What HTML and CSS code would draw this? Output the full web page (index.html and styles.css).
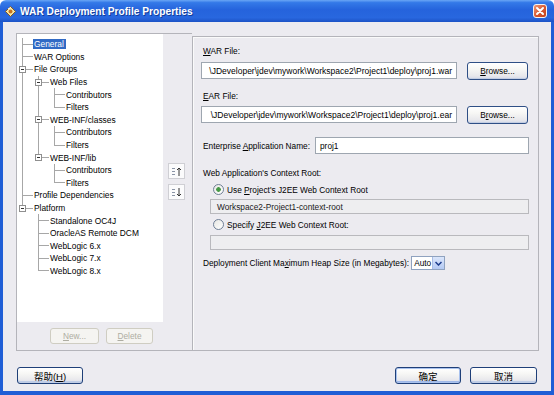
FILE: index.html
```html
<!DOCTYPE html>
<html lang="en">
<head>
    <meta charset="UTF-8">
    <title>WAR Deployment Profile Properties</title>
    <link rel="stylesheet" href="styles.css">
</head>
<body>

<div class="window">
    <div class="titlebar">
        <svg class="app-icon" width="11" height="11" viewBox="0 0 11 11">
            <path d="M5.5 0.5 L10.5 5.5 L5.5 10.5 L0.5 5.5 Z" fill="#f4e7a8" stroke="#8a5a1c" stroke-width="1"/>
            <circle cx="5.5" cy="5.5" r="2" fill="#c9731e"/>
            <path d="M3 3 L5.5 1.5" stroke="#fff" stroke-width="1"/>
        </svg>
        <span class="title">WAR Deployment Profile Properties</span>
        <span class="close-btn">
            <svg width="12" height="12" viewBox="0 0 12 12">
                <path d="M3 3 L9 9 M9 3 L3 9" stroke="#fff" stroke-width="2" stroke-linecap="round"/>
            </svg>
        </span>
    </div>

    <div class="body">
        <div class="main">
            <div class="nav-pane">
                <div class="nav-col">
                    <div class="tree">
                        <div class="row"><i class="g t"></i><span class="label selected">General</span></div>
                        <div class="row"><i class="g t"></i><span class="label">WAR Options</span></div>
                        <div class="row"><i class="g t"><b class="exp"></b></i><span class="label">File Groups</span></div>
                        <div class="row"><i class="g v"></i><i class="g t"><b class="exp"></b></i><span class="label">Web Files</span></div>
                        <div class="row"><i class="g v"></i><i class="g v"></i><i class="g t"></i><span class="label">Contributors</span></div>
                        <div class="row"><i class="g v"></i><i class="g v"></i><i class="g l"></i><span class="label">Filters</span></div>
                        <div class="row"><i class="g v"></i><i class="g t"><b class="exp"></b></i><span class="label">WEB-INF/classes</span></div>
                        <div class="row"><i class="g v"></i><i class="g v"></i><i class="g t"></i><span class="label">Contributors</span></div>
                        <div class="row"><i class="g v"></i><i class="g v"></i><i class="g l"></i><span class="label">Filters</span></div>
                        <div class="row"><i class="g v"></i><i class="g l"><b class="exp"></b></i><span class="label">WEB-INF/lib</span></div>
                        <div class="row"><i class="g v"></i><i class="g"></i><i class="g t"></i><span class="label">Contributors</span></div>
                        <div class="row"><i class="g v"></i><i class="g"></i><i class="g l"></i><span class="label">Filters</span></div>
                        <div class="row"><i class="g t"></i><span class="label">Profile Dependencies</span></div>
                        <div class="row"><i class="g l"><b class="exp"></b></i><span class="label">Platform</span></div>
                        <div class="row"><i class="g"></i><i class="g t"></i><span class="label">Standalone OC4J</span></div>
                        <div class="row"><i class="g"></i><i class="g t"></i><span class="label">OracleAS Remote DCM</span></div>
                        <div class="row"><i class="g"></i><i class="g t"></i><span class="label">WebLogic 6.x</span></div>
                        <div class="row"><i class="g"></i><i class="g t"></i><span class="label">WebLogic 7.x</span></div>
                        <div class="row"><i class="g"></i><i class="g l"></i><span class="label">WebLogic 8.x</span></div>
                    </div>
                    <div class="nav-actions">
                        <button class="btn disabled new-btn"><u>N</u>ew...</button>
                        <button class="btn disabled delete-btn"><u>D</u>elete</button>
                    </div>
                </div>
                <div class="order-btns">
                    <button class="order-btn">
                        <svg width="11" height="11" viewBox="0 0 11 11">
                            <path d="M1 2.5 H4 M1 5.5 H4 M1 8.5 H4" stroke="#8a94a6" stroke-width="1"/>
                            <path d="M8 2 V10 M6 4 L8 2 L10 4" stroke="#333" stroke-width="1" fill="none"/>
                        </svg>
                    </button>
                    <button class="order-btn">
                        <svg width="11" height="11" viewBox="0 0 11 11">
                            <path d="M1 2.5 H4 M1 5.5 H4 M1 8.5 H4" stroke="#8a94a6" stroke-width="1"/>
                            <path d="M8 1 V9 M6 7 L8 9 L10 7" stroke="#333" stroke-width="1" fill="none"/>
                        </svg>
                    </button>
                </div>
            </div>

            <div class="props-pane">
                <div class="lbl-block first"><u>W</u>AR File:</div>
                <div class="field-row">
                    <div class="field path"><span>\JDeveloper\jdev\mywork\Workspace2\Project1\deploy\proj1.war</span></div>
                    <button class="btn browse"><u>B</u>rowse...</button>
                </div>

                <div class="lbl-block ear"><u>E</u>AR File:</div>
                <div class="field-row">
                    <div class="field path"><span>\JDeveloper\jdev\mywork\Workspace2\Project1\deploy\proj1.ear</span></div>
                    <button class="btn browse">B<u>r</u>owse...</button>
                </div>

                <div class="name-row">
                    <span class="lbl">Enterprise <u>A</u>pplication Name:</span>
                    <div class="field name-field">proj1</div>
                </div>

                <div class="lbl-block context">Web Application's Context Root:</div>
                <div class="radio-row">
                    <span class="radio checked"></span>
                    <span>Use <u>P</u>roject's J2EE Web Context Root</span>
                </div>
                <div class="field disabled-field">Workspace2-Project1-context-root</div>
                <div class="radio-row second">
                    <span class="radio"></span>
                    <span>Specify <u>J</u>2EE Web Context Root:</span>
                </div>
                <div class="field disabled-field second"></div>

                <div class="heap-row">
                    <span class="lbl">Deployment Client Ma<u>x</u>imum Heap Size (in Megabytes):</span>
                    <div class="select">
                        <span class="select-value">Auto</span>
                        <span class="select-arrow">
                            <svg width="7" height="5" viewBox="0 0 7 5">
                                <path d="M0.5 1 L3.5 4 L6.5 1" stroke="#1c3c8c" stroke-width="1.5" fill="none"/>
                            </svg>
                        </span>
                    </div>
                </div>
            </div>
        </div>

        <div class="footer">
            <button class="btn dlg-btn cjk">帮助(<u>H</u>)</button>
            <span class="spacer"></span>
            <button class="btn dlg-btn cjk default">确定</button>
            <button class="btn dlg-btn cjk cancel">取消</button>
        </div>
    </div>
</div>

</body>
</html>
```

FILE: styles.css
```css
html {
    background: #ffffff;
}
body {
    margin: 0;
    font-family: 'Liberation Sans', Arial, sans-serif;
    font-size: 8.3px;
    color: #000;
}
u {
    text-decoration: underline;
    text-underline-offset: 1px;
}
.window {
    width: 554px;
    height: 395px;
    display: flex;
    flex-direction: column;
    border-radius: 6px 6px 0 0;
    overflow: hidden;
}
.titlebar {
    height: 22px;
    flex: none;
    display: flex;
    align-items: center;
    padding: 0 7px 0 5px;
    background: linear-gradient(#6aa6f5 0, #3479e8 12%, #2563dc 45%, #2867df 80%, #1c53c6 100%);
}
.app-icon {
    flex: none;
}
.title {
    margin-left: 4px;
    color: #fff;
    font-weight: bold;
    font-size: 10.2px;
    text-shadow: 1px 1px 0 #123d9a;
}
.close-btn {
    margin-left: auto;
    width: 14px;
    height: 14px;
    box-sizing: border-box;
    border: 1px solid #f3f3f3;
    border-radius: 3px;
    background: linear-gradient(135deg, #ee9a78, #d6562f 55%, #c4431c);
    display: flex;
    align-items: center;
    justify-content: center;
}
.body {
    flex: 1;
    background: #ecebf0;
    border: 3px solid #1f5ed6;
    border-top: none;
    border-bottom-width: 4px;
    padding: 11px 12px 0 13px;
    display: flex;
    flex-direction: column;
}
.main {
    width: 523px;
    height: 318px;
    display: flex;
    align-items: flex-start;
}
.nav-pane {
    width: 176px;
    height: 318px;
    box-sizing: border-box;
    border: 1px solid #b4b4ba;
    border-right: none;
    display: flex;
}
.nav-col {
    width: 146px;
    display: flex;
    flex-direction: column;
}
.tree {
    height: 288px;
    box-sizing: border-box;
    background: #fff;
    padding-top: 4px;
}
.row {
    height: 12.6px;
    display: flex;
    align-items: center;
}
.g {
    width: 16px;
    height: 100%;
    flex: none;
    display: flex;
    align-items: center;
}
.g.v {
    background: linear-gradient(#a7a7a7, #a7a7a7) 5px 0 / 1px 100% no-repeat;
}
.g.t {
    background:
        linear-gradient(#a7a7a7, #a7a7a7) 5px 0 / 1px 100% no-repeat,
        linear-gradient(#a7a7a7, #a7a7a7) 5px 50% / 11px 1px no-repeat;
}
.g.l {
    background:
        linear-gradient(#a7a7a7, #a7a7a7) 5px 0 / 1px 50% no-repeat,
        linear-gradient(#a7a7a7, #a7a7a7) 5px 50% / 11px 1px no-repeat;
}
.exp {
    width: 7px;
    height: 7px;
    margin-left: 2px;
    box-sizing: border-box;
    border: 1px solid #8f8f8f;
    background: linear-gradient(#333, #333) center / 3px 1px no-repeat, #fff;
}
.label {
    padding: 0 2px 0 1px;
    line-height: 10px;
    white-space: nowrap;
    font-size: 8.4px;
}
.label.selected {
    background: #316ac5;
    color: #fff;
}
.nav-actions {
    margin-top: 6px;
    display: flex;
    justify-content: flex-end;
    gap: 7px;
    padding-right: 10px;
}
.btn {
    font-family: 'Liberation Sans', Arial, sans-serif;
    font-size: 8.3px;
    color: #000;
    padding: 0;
    box-sizing: border-box;
    border: 1px solid #2f4f86;
    border-radius: 3px;
    background: linear-gradient(#ffffff, #f6f6f4 40%, #e8e8ec 80%, #d6dae8);
    box-shadow: inset 0 -1px 0 #c3cde2;
}
.btn.disabled {
    height: 16px;
    color: #aeada2;
    border-color: #cfcdc2;
    background: #f5f4f1;
    box-shadow: none;
}
.new-btn {
    width: 49px;
}
.delete-btn {
    width: 47px;
}
.order-btns {
    margin-left: 5px;
    padding-top: 129px;
    display: flex;
    flex-direction: column;
    gap: 5px;
}
.order-btn {
    width: 17px;
    height: 16px;
    padding: 0;
    border: 1px solid #cfcfd4;
    background: #fbfbfc;
    display: flex;
    align-items: center;
    justify-content: center;
}
.props-pane {
    width: 347px;
    height: 315px;
    margin-top: 3px;
    box-sizing: border-box;
    border: 1px solid #b4b4ba;
    box-shadow: inset 1px 1px 0 #fafafa;
    padding: 0 9px 0 8px;
    display: flex;
    flex-direction: column;
}
.lbl-block {
    height: 10px;
    line-height: 10px;
    margin-left: 2px;
}
.lbl-block.first {
    margin-top: 9px;
}
.lbl-block.ear {
    margin-top: 11px;
}
.lbl-block.context {
    margin-top: 14px;
}
.field-row {
    display: flex;
    align-items: flex-start;
    gap: 10px;
    margin-top: 6px;
}
.field-row + .lbl-block + .field-row {
    margin-top: 5px;
}
.field {
    height: 17px;
    box-sizing: border-box;
    border: 1px solid #9ea6b0;
    background: #fff;
    display: flex;
    align-items: center;
    white-space: nowrap;
    overflow: hidden;
    padding: 0 4px;
}
.field.path {
    width: 256px;
    justify-content: flex-end;
}
.field.path span {
    font-size: 8.5px;
}
.btn.browse {
    width: 61px;
    height: 18px;
}
.name-row {
    margin-top: 13px;
    height: 17px;
    display: flex;
    align-items: center;
}
.lbl {
    margin-left: 2px;
    white-space: nowrap;
}
.name-field {
    margin-left: auto;
    width: 214px;
}
.radio-row {
    margin-top: 6px;
    height: 11px;
    display: flex;
    align-items: center;
    padding-left: 12px;
    gap: 3px;
}
.radio-row.second {
    margin-top: 5px;
}
.radio {
    width: 11px;
    height: 11px;
    box-sizing: border-box;
    border: 1px solid #6f7f96;
    border-radius: 50%;
    background: linear-gradient(135deg, #e6e6e2, #ffffff);
}
.radio.checked {
    background: radial-gradient(circle, #3f9a3f 0, #4c9a4c 2px, transparent 2.6px), linear-gradient(135deg, #e6e6e2, #ffffff);
}
.field.disabled-field {
    margin-top: 4px;
    margin-left: 9px;
    width: 319px;
    height: 15px;
    background: #eeeef0;
    border-color: #b9b9bd;
    color: #1a1a1a;
    padding-left: 6px;
}
.field.disabled-field.second {
    margin-top: 5px;
}
.heap-row {
    margin-top: 6px;
    height: 14px;
    display: flex;
    align-items: center;
    gap: 2px;
}
.select {
    width: 34px;
    height: 14px;
    box-sizing: border-box;
    border: 1px solid #8fa2bf;
    background: #fff;
    display: flex;
    align-items: center;
}
.select-value {
    flex: 1;
    padding-left: 2px;
}
.select-arrow {
    width: 11px;
    height: 12px;
    background: linear-gradient(#dbe6fb, #b4c9f3);
    border-left: 1px solid #a9bde6;
    display: flex;
    align-items: center;
    justify-content: center;
}
.footer {
    margin-top: 16px;
    padding-left: 1px;
    padding-right: 2px;
    display: flex;
    gap: 9px;
}
.spacer {
    flex: 1;
}
.btn.dlg-btn {
    width: 66px;
    height: 17px;
    border-color: #1f3f78;
    box-shadow: inset 0 -2px 0 #c0cde6;
}
.btn.cancel {
    width: 67px;
}
.btn.default {
    box-shadow: inset 0 0 0 1px #a9c2ee, inset 0 -2px 0 #9fb8e8;
}
.cjk {
    font-family: 'Liberation Sans', 'Noto Sans CJK SC', sans-serif;
    font-size: 9.5px;
}
```
